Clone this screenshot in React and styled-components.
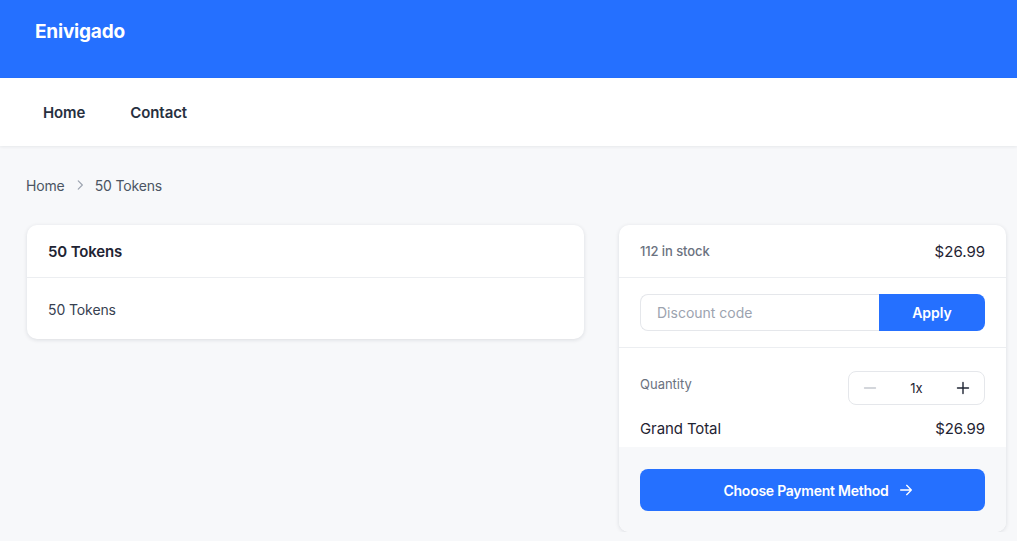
import React from "react";
import styled, { createGlobalStyle } from "styled-components";

const Global = createGlobalStyle`
  * { box-sizing: border-box; }
  body {
    margin: 0;
    background: #f7f8fa;
    font-family: Inter, "Noto Sans", sans-serif;
    color: #1f2937;
  }
`;

const Header = styled.header`
  background: #2570ff;
  height: 78px;
  padding: 20px 35px 0;
  display: flex;
  align-items: flex-start;
`;

const Brand = styled.div`
  color: #fff;
  font-size: 19px;
  font-weight: 700;
  letter-spacing: -0.2px;
`;

const Nav = styled.nav`
  background: #fff;
  height: 68px;
  display: flex;
  align-items: center;
  padding: 0 43px;
  gap: 45px;
  box-shadow: 0 1px 3px rgba(15, 23, 42, 0.07);
`;

const NavLink = styled.a`
  font-size: 15px;
  font-weight: 600;
  color: #27303f;
  text-decoration: none;
  letter-spacing: -0.1px;
`;

const Main = styled.main`
  padding: 29px 11px 0 27px;
`;

const Crumbs = styled.div`
  display: flex;
  align-items: center;
  gap: 8px;
  font-size: 14px;
  color: #4b5563;
  margin-left: -1px;
  height: 20px;
  letter-spacing: -0.15px;
`;

const Columns = styled.div`
  display: grid;
  grid-template-columns: 557px 387px;
  justify-content: space-between;
  align-items: start;
  margin-top: 30px;
`;

const Card = styled.section`
  background: #fff;
  border-radius: 10px;
  box-shadow: 0 1px 4px rgba(15, 23, 42, 0.12);
  overflow: hidden;
`;

const CardHead = styled.div`
  height: 53px;
  padding: 0 21px;
  display: flex;
  align-items: center;
  justify-content: space-between;
  border-bottom: 1px solid #eceef1;
`;

const Title = styled.h2`
  margin: 0;
  font-size: 15px;
  font-weight: 600;
  color: #1f2433;
  letter-spacing: -0.15px;
`;

const CardBody = styled.div`
  padding: 23px 21px 21px;
  font-size: 14px;
  color: #374151;
  letter-spacing: -0.1px;
`;

const Stock = styled.span`
  font-size: 13px;
  font-weight: 500;
  color: #6b7280;
  letter-spacing: -0.1px;
`;

const Price = styled.span`
  font-size: 15px;
  color: #1f2433;
`;

const Section = styled.div`
  padding: ${(p) => p.$pad};
  border-bottom: ${(p) => (p.$line ? "1px solid #eceef1" : "none")};
`;

const DiscountForm = styled.div`
  display: flex;
  height: 37px;
`;

const Input = styled.input`
  flex: 1;
  min-width: 0;
  border: 1px solid #e5e7eb;
  border-right: none;
  border-radius: 8px 0 0 8px;
  padding: 0 16px;
  font-family: inherit;
  font-size: 14px;
  color: #1f2937;
  outline: none;
  &::placeholder { color: #9ca3af; }
`;

const ApplyButton = styled.button`
  width: 106px;
  border: none;
  border-radius: 0 8px 8px 0;
  background: #2570ff;
  color: #fff;
  font-family: inherit;
  font-size: 14px;
  font-weight: 600;
`;

const Row = styled.div`
  display: flex;
  justify-content: space-between;
  align-items: ${(p) => p.$align || "center"};
`;

const Label = styled.span`
  font-size: 13px;
  color: #6b7280;
  margin-top: 5px;
`;

const Stepper = styled.div`
  width: 137px;
  height: 34px;
  border: 1px solid #e5e7eb;
  border-radius: 8px;
  display: flex;
  align-items: center;
  justify-content: space-between;
  padding: 0 14px;
`;

const StepButton = styled.button`
  border: none;
  background: none;
  padding: 0;
  width: 14px;
  height: 14px;
  display: flex;
  align-items: center;
  justify-content: center;
  color: ${(p) => (p.$muted ? "#c5c9d0" : "#1f2433")};
`;

const Count = styled.span`
  font-size: 13px;
  color: #1f2433;
`;

const TotalRow = styled(Row)`
  margin-top: 14px;
  padding-bottom: 9px;
`;

const TotalText = styled.span`
  font-size: 15px;
  color: #1f2433;
  letter-spacing: -0.1px;
`;

const Footer = styled.div`
  background: #f7f8fa;
  padding: 22px 21px 21px;
`;

const PayButton = styled.button`
  width: 100%;
  height: 42px;
  border: none;
  border-radius: 8px;
  background: #2570ff;
  color: #fff;
  font-family: inherit;
  font-size: 14px;
  font-weight: 600;
  letter-spacing: -0.25px;
  display: flex;
  align-items: center;
  justify-content: center;
  gap: 9px;
  padding: 0 0 0 12px;
`;

const Chevron = () => (
  <svg width="14" height="14" viewBox="0 0 24 24" fill="none" stroke="#9ca3af" strokeWidth="2" strokeLinecap="round" strokeLinejoin="round">
    <path d="M9 5l7 7-7 7" />
  </svg>
);

const Minus = () => (
  <svg width="14" height="14" viewBox="0 0 14 14" fill="none" stroke="currentColor" strokeWidth="1.4" strokeLinecap="round">
    <path d="M1.5 7h11" />
  </svg>
);

const Plus = () => (
  <svg width="14" height="14" viewBox="0 0 14 14" fill="none" stroke="currentColor" strokeWidth="1.4" strokeLinecap="round">
    <path d="M1.5 7h11M7 1.5v11" />
  </svg>
);

const Arrow = () => (
  <svg width="16" height="16" viewBox="0 0 24 24" fill="none" stroke="currentColor" strokeWidth="2" strokeLinecap="round" strokeLinejoin="round">
    <path d="M4 12h16M13 5l7 7-7 7" />
  </svg>
);

export default function App() {
  return (
    <>
      <Global />
      <Header>
        <Brand>Enivigado</Brand>
      </Header>
      <Nav>
        <NavLink href="#">Home</NavLink>
        <NavLink href="#">Contact</NavLink>
      </Nav>
      <Main>
        <Crumbs>
          <span>Home</span>
          <Chevron />
          <span>50 Tokens</span>
        </Crumbs>
        <Columns>
          <Card>
            <CardHead>
              <Title>50 Tokens</Title>
            </CardHead>
            <CardBody>50 Tokens</CardBody>
          </Card>
          <Card>
            <CardHead>
              <Stock>112 in stock</Stock>
              <Price>$26.99</Price>
            </CardHead>
            <Section $pad="16px 21px 16px" $line>
              <DiscountForm>
                <Input placeholder="Discount code" />
                <ApplyButton>Apply</ApplyButton>
              </DiscountForm>
            </Section>
            <Section $pad="23px 21px 0">
              <Row $align="flex-start">
                <Label>Quantity</Label>
                <Stepper>
                  <StepButton $muted><Minus /></StepButton>
                  <Count>1x</Count>
                  <StepButton><Plus /></StepButton>
                </Stepper>
              </Row>
              <TotalRow>
                <TotalText>Grand Total</TotalText>
                <TotalText>$26.99</TotalText>
              </TotalRow>
            </Section>
            <Footer>
              <PayButton>
                Choose Payment Method <Arrow />
              </PayButton>
            </Footer>
          </Card>
        </Columns>
      </Main>
    </>
  );
}
